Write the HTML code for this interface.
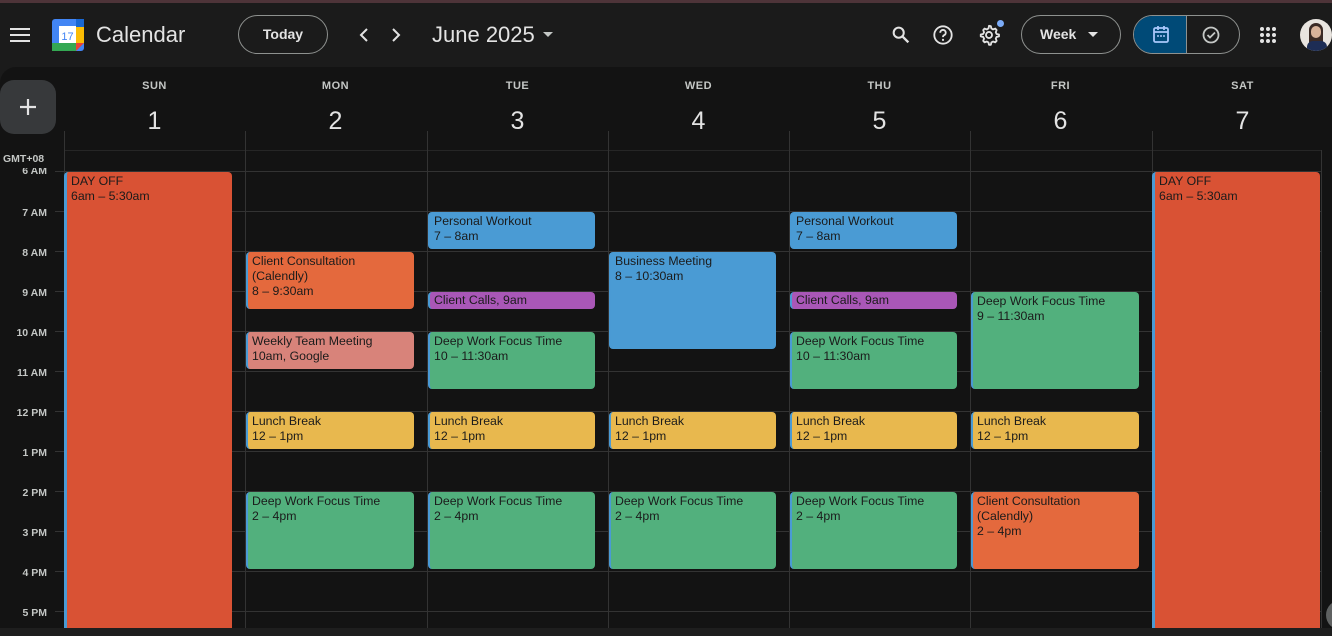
<!DOCTYPE html>
<html><head><meta charset="utf-8"><style>
*{box-sizing:border-box;margin:0;padding:0}
body{width:1332px;height:636px;overflow:hidden;background:#1b1b1b;font-family:"Liberation Sans",Arial,sans-serif;color:#e3e3e3;position:relative}
.a{position:absolute}
.top{left:0;top:0;width:1332px;height:3px;background:#4e3439}
.panel{left:0;top:67px;width:1332px;height:561px;background:#131313;border-radius:16px 0 0 0}
.bottom{left:0;top:628px;width:1332px;height:8px;background:#1e1e1e}
.dl{font-size:11px;font-weight:bold;color:#c4c7c5;text-align:center;width:181px;letter-spacing:.5px}
.dn{font-size:25px;color:#e3e3e3;text-align:center;width:181px}
.vl{width:1px;background:#333}
.hl{height:1px;background:#333}
.tl{font-size:10.5px;font-weight:bold;color:#c4c7c5;width:47px;text-align:right}
.ev{border-radius:4px;border-left:2px solid #4a9ad4;padding:2px 0 0 4px;font-size:12.3px;line-height:15px;color:#1b1b1b;overflow:hidden}
.r{background:#d95234}.o{background:#e4693d}.s{background:#d8837a}.y{background:#e8b84e}.g{background:#52b07d}.b{background:#4a9bd4}.p{background:#a957b7}
.btn{border:1px solid #8e918f;border-radius:20px}
</style></head><body>
<div class="a top"></div>
<svg class="a" style="left:10px;top:27px" width="20" height="16"><rect y="1" width="20" height="2" fill="#e3e3e3"/><rect y="7" width="20" height="2" fill="#e3e3e3"/><rect y="13" width="20" height="2" fill="#e3e3e3"/></svg>
<svg class="a" style="left:52px;top:19px" width="32" height="32" viewBox="0 0 32 32">
<rect x="0" y="0" width="32" height="32" rx="3" fill="#4285f4"/>
<rect x="24" y="0" width="8" height="24" fill="#1967d2"/>
<rect x="0" y="24" width="24" height="8" fill="#34a853"/>
<rect x="24" y="8" width="8" height="16" fill="#fbbc04"/>
<path d="M24 24h8l-8 8z" fill="#ea4335"/>
<rect x="7" y="7" width="17" height="17" fill="#fff"/>
<text x="15.5" y="21" font-size="11" text-anchor="middle" fill="#4285f4" font-family="Liberation Sans">17</text>
</svg>
<div class="a" style="left:96px;top:22px;font-size:22px;color:#e3e3e3">Calendar</div>
<div class="a btn" style="left:238px;top:15px;width:90px;height:39px;font-size:14px;font-weight:bold;text-align:center;line-height:37px">Today</div>
<svg class="a" style="left:357px;top:27px" width="14" height="16"><path d="M10 2L4 8l6 6" stroke="#e3e3e3" stroke-width="2" fill="none"/></svg>
<svg class="a" style="left:389px;top:27px" width="14" height="16"><path d="M4 2l6 6-6 6" stroke="#e3e3e3" stroke-width="2" fill="none"/></svg>
<div class="a" style="left:432px;top:22px;font-size:22px">June 2025</div>
<svg class="a" style="left:543px;top:32px" width="10" height="6"><path d="M0 0h10L5 5z" fill="#c4c7c5"/></svg>
<svg class="a" style="left:890px;top:24px" width="22" height="22" viewBox="0 0 24 24"><circle cx="9.5" cy="9.5" r="5.5" stroke="#e3e3e3" stroke-width="2.2" fill="none"/><path d="M14 14l6 6" stroke="#e3e3e3" stroke-width="2.6"/></svg>
<svg class="a" style="left:932px;top:24px" width="22" height="22" viewBox="0 0 24 24"><circle cx="12" cy="12" r="9.5" stroke="#e3e3e3" stroke-width="2" fill="none"/><path d="M9 9.5a3 3 0 1 1 4 2.8c-.8.4-1 1-1 2" stroke="#e3e3e3" stroke-width="2" fill="none"/><circle cx="12" cy="17.3" r="1.2" fill="#e3e3e3"/></svg>
<svg class="a" style="left:978px;top:24px" width="22" height="22" viewBox="0 0 24 24"><path d="M12 2l2 .3.6 2.6 1.8 1 2.5-.9 1.4 1.6-.9 2.5.9 1.8 2.6.6v2l-2.6.6-.9 1.8.9 2.5-1.4 1.6-2.5-.9-1.8 1-.6 2.6h-2l-.6-2.6-1.8-1-2.5.9-1.400-1.6.9-2.5-1-1.8-2.6-.6v-2l2.6-.6 1-1.8-.9-2.5 1.4-1.6 2.5.9 1.8-1 .6-2.6z" stroke="#e3e3e3" stroke-width="2" fill="none" stroke-linejoin="round"/><circle cx="12" cy="12" r="3.3" stroke="#e3e3e3" stroke-width="2" fill="none"/></svg>
<div class="a" style="left:997px;top:20px;width:7px;height:7px;border-radius:50%;background:#7cacf8"></div>
<div class="a btn" style="left:1021px;top:15px;width:100px;height:39px;font-size:14px;font-weight:bold;line-height:37px;padding-left:18px">Week</div>
<svg class="a" style="left:1088px;top:32px" width="10" height="6"><path d="M0 0h10L5 5z" fill="#e3e3e3"/></svg>
<div class="a btn" style="left:1133px;top:15px;width:107px;height:39px;overflow:hidden"><div style="width:53px;height:39px;background:#004a77;border-right:1px solid #8e918f"></div></div>
<svg class="a" style="left:1152px;top:25px" width="18" height="19" viewBox="0 0 18 19"><rect x="2" y="3" width="14" height="14" rx="1.5" stroke="#a8c7fa" stroke-width="1.8" fill="none"/><path d="M2 7h14M6 1v4M12 1v4" stroke="#a8c7fa" stroke-width="1.8"/><circle cx="6" cy="11" r="1" fill="#a8c7fa"/><circle cx="9" cy="11" r="1" fill="#a8c7fa"/><circle cx="12" cy="11" r="1" fill="#a8c7fa"/></svg>
<svg class="a" style="left:1201px;top:25px" width="20" height="20" viewBox="0 0 20 20"><circle cx="10" cy="10" r="7.5" stroke="#c4c7c5" stroke-width="1.8" fill="none"/><path d="M6.5 10l2.5 2.5 5-5" stroke="#c4c7c5" stroke-width="1.8" fill="none"/></svg>
<svg class="a" style="left:1259px;top:26px" width="18" height="18"><g fill="#e3e3e3"><circle cx="3" cy="3" r="2"/><circle cx="9" cy="3" r="2"/><circle cx="15" cy="3" r="2"/><circle cx="3" cy="9" r="2"/><circle cx="9" cy="9" r="2"/><circle cx="15" cy="9" r="2"/><circle cx="3" cy="15" r="2"/><circle cx="9" cy="15" r="2"/><circle cx="15" cy="15" r="2"/></g></svg>
<div class="a" style="left:1300px;top:19px;width:32px;height:32px;border-radius:50%;background:#e8e4df;overflow:hidden">
<div style="position:absolute;left:9px;top:4px;width:14px;height:26px;border-radius:7px;background:#3a2a25"></div>
<div style="position:absolute;left:11px;top:7px;width:10px;height:12px;border-radius:5px;background:#d8b39a"></div>
<div style="position:absolute;left:7px;top:22px;width:20px;height:12px;background:#1d2d55;border-radius:6px 6px 0 0"></div></div>

<div class="a panel"></div>
<div class="a" style="left:0;top:80px;width:56px;height:54px;border-radius:14px;background:#37393b"></div>
<svg class="a" style="left:19px;top:98px" width="18" height="18"><path d="M9 1v16M1 9h16" stroke="#e3e3e3" stroke-width="2.2"/></svg>

<div class="a dl" style="left:64px;top:80px">SUN</div><div class="a dn" style="left:64px;top:107px">1</div>
<div class="a dl" style="left:245px;top:80px">MON</div><div class="a dn" style="left:245px;top:107px">2</div>
<div class="a dl" style="left:427px;top:80px">TUE</div><div class="a dn" style="left:427px;top:107px">3</div>
<div class="a dl" style="left:608px;top:80px">WED</div><div class="a dn" style="left:608px;top:107px">4</div>
<div class="a dl" style="left:789px;top:80px">THU</div><div class="a dn" style="left:789px;top:107px">5</div>
<div class="a dl" style="left:970px;top:80px">FRI</div><div class="a dn" style="left:970px;top:107px">6</div>
<div class="a dl" style="left:1152px;top:80px">SAT</div><div class="a dn" style="left:1152px;top:107px">7</div>

<div class="a hl" style="left:64px;top:150px;width:1257px;background:#262626"></div>
<div class="a vl" style="left:64px;top:131px;height:497px"></div>
<div class="a vl" style="left:245px;top:131px;height:497px"></div>
<div class="a vl" style="left:427px;top:131px;height:497px"></div>
<div class="a vl" style="left:608px;top:131px;height:497px"></div>
<div class="a vl" style="left:789px;top:131px;height:497px"></div>
<div class="a vl" style="left:970px;top:131px;height:497px"></div>
<div class="a vl" style="left:1152px;top:131px;height:497px"></div>
<div class="a vl" style="left:1321px;top:150px;height:478px"></div>
<div class="a hl" style="left:55px;top:171px;width:1266px"></div>
<div class="a hl" style="left:55px;top:211px;width:1266px"></div>
<div class="a hl" style="left:55px;top:251px;width:1266px"></div>
<div class="a hl" style="left:55px;top:291px;width:1266px"></div>
<div class="a hl" style="left:55px;top:331px;width:1266px"></div>
<div class="a hl" style="left:55px;top:371px;width:1266px"></div>
<div class="a hl" style="left:55px;top:411px;width:1266px"></div>
<div class="a hl" style="left:55px;top:451px;width:1266px"></div>
<div class="a hl" style="left:55px;top:491px;width:1266px"></div>
<div class="a hl" style="left:55px;top:531px;width:1266px"></div>
<div class="a hl" style="left:55px;top:571px;width:1266px"></div>
<div class="a hl" style="left:55px;top:611px;width:1266px"></div>

<div class="a" style="left:3px;top:153px;font-size:10.5px;font-weight:bold;color:#c4c7c5">GMT+08</div>
<div class="a tl" style="top:168px;height:8px;overflow:hidden;line-height:6px">6 AM</div>
<div class="a tl" style="top:207px">7 AM</div>
<div class="a tl" style="top:247px">8 AM</div>
<div class="a tl" style="top:287px">9 AM</div>
<div class="a tl" style="top:327px">10 AM</div>
<div class="a tl" style="top:367px">11 AM</div>
<div class="a tl" style="top:407px">12 PM</div>
<div class="a tl" style="top:447px">1 PM</div>
<div class="a tl" style="top:487px">2 PM</div>
<div class="a tl" style="top:527px">3 PM</div>
<div class="a tl" style="top:567px">4 PM</div>
<div class="a tl" style="top:607px">5 PM</div>

<div class="a ev r" style="left:64px;top:172px;width:168px;height:456px;border-left-width:3px;border-radius:4px 4px 0 0">DAY OFF<br>6am – 5:30am</div>
<div class="a ev r" style="left:1152px;top:172px;width:168px;height:456px;border-left-width:3px;border-radius:4px 4px 0 0">DAY OFF<br>6am – 5:30am</div>

<div class="a ev o" style="left:246px;top:252px;width:168px;height:57px">Client Consultation<br>(Calendly)<br>8 – 9:30am</div>
<div class="a ev s" style="left:246px;top:332px;width:168px;height:37px">Weekly Team Meeting<br>10am, Google</div>
<div class="a ev y" style="left:246px;top:412px;width:168px;height:37px">Lunch Break<br>12 – 1pm</div>
<div class="a ev g" style="left:246px;top:492px;width:168px;height:77px">Deep Work Focus Time<br>2 – 4pm</div>

<div class="a ev b" style="left:428px;top:212px;width:167px;height:37px">Personal Workout<br>7 – 8am</div>
<div class="a ev p" style="left:428px;top:292px;width:167px;height:17px;padding-top:1px">Client Calls, 9am</div>
<div class="a ev g" style="left:428px;top:332px;width:167px;height:57px">Deep Work Focus Time<br>10 – 11:30am</div>
<div class="a ev y" style="left:428px;top:412px;width:167px;height:37px">Lunch Break<br>12 – 1pm</div>
<div class="a ev g" style="left:428px;top:492px;width:167px;height:77px">Deep Work Focus Time<br>2 – 4pm</div>

<div class="a ev b" style="left:609px;top:252px;width:167px;height:97px">Business Meeting<br>8 – 10:30am</div>
<div class="a ev y" style="left:609px;top:412px;width:167px;height:37px">Lunch Break<br>12 – 1pm</div>
<div class="a ev g" style="left:609px;top:492px;width:167px;height:77px">Deep Work Focus Time<br>2 – 4pm</div>

<div class="a ev b" style="left:790px;top:212px;width:167px;height:37px">Personal Workout<br>7 – 8am</div>
<div class="a ev p" style="left:790px;top:292px;width:167px;height:17px;padding-top:1px">Client Calls, 9am</div>
<div class="a ev g" style="left:790px;top:332px;width:167px;height:57px">Deep Work Focus Time<br>10 – 11:30am</div>
<div class="a ev y" style="left:790px;top:412px;width:167px;height:37px">Lunch Break<br>12 – 1pm</div>
<div class="a ev g" style="left:790px;top:492px;width:167px;height:77px">Deep Work Focus Time<br>2 – 4pm</div>

<div class="a ev g" style="left:971px;top:292px;width:168px;height:97px">Deep Work Focus Time<br>9 – 11:30am</div>
<div class="a ev y" style="left:971px;top:412px;width:168px;height:37px">Lunch Break<br>12 – 1pm</div>
<div class="a ev o" style="left:971px;top:492px;width:168px;height:77px">Client Consultation<br>(Calendly)<br>2 – 4pm</div>

<div class="a bottom"></div>
<div class="a" style="left:1326px;top:600px;width:30px;height:30px;border-radius:50%;background:#5f6161"></div>
</body></html>
